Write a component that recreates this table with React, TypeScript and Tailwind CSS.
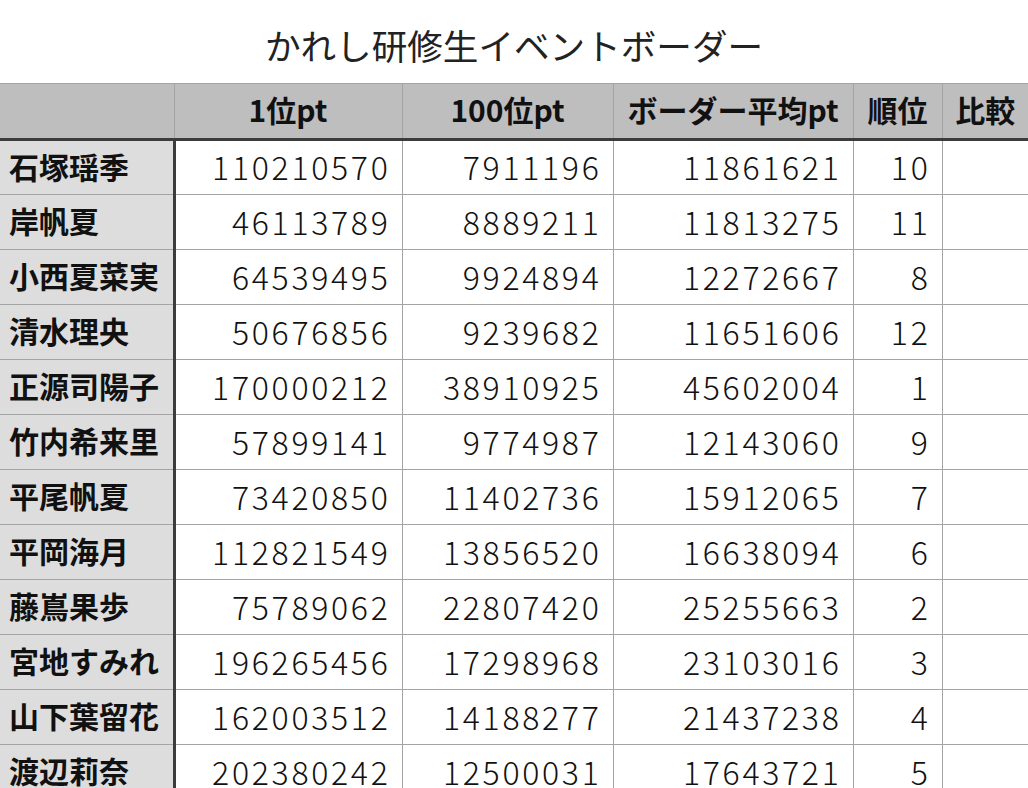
import React from "react";

const rows: [string, string, string, string, string][] = [
  ["石塚瑶季", "110210570", "7911196", "11861621", "10"],
  ["岸帆夏", "46113789", "8889211", "11813275", "11"],
  ["小西夏菜実", "64539495", "9924894", "12272667", "8"],
  ["清水理央", "50676856", "9239682", "11651606", "12"],
  ["正源司陽子", "170000212", "38910925", "45602004", "1"],
  ["竹内希来里", "57899141", "9774987", "12143060", "9"],
  ["平尾帆夏", "73420850", "11402736", "15912065", "7"],
  ["平岡海月", "112821549", "13856520", "16638094", "6"],
  ["藤嶌果歩", "75789062", "22807420", "25255663", "2"],
  ["宮地すみれ", "196265456", "17298968", "23103016", "3"],
  ["山下葉留花", "162003512", "14188277", "21437238", "4"],
  ["渡辺莉奈", "202380242", "12500031", "17643721", "5"],
];

export default function App() {
  return (
    <div className="w-[1028px] h-[788px] overflow-hidden bg-white text-[#111] [font-family:'Noto_Sans_CJK_JP','Noto_Sans',sans-serif]">
      <div className="h-[83px] flex items-center justify-center pt-[6px]">
        <h1 className="text-[35.6px] font-normal text-[#222]">かれし研修生イベントボーダー</h1>
      </div>
      <table className="border-collapse table-fixed w-[1028px]">
        <colgroup>
          <col className="w-[174px]" />
          <col className="w-[228px]" />
          <col className="w-[211px]" />
          <col className="w-[240px]" />
          <col className="w-[89px]" />
          <col className="w-[86px]" />
        </colgroup>
        <thead>
          <tr className="h-[56px] bg-[#bebebe] border-t border-[#a4a4a4] border-b-[3px] border-b-[#3c3c3c]">
            <th className="border-r border-[#a4a4a4]"></th>
            <th className="border-r border-[#a4a4a4] pb-[3px] text-[30px] font-bold text-center">1位pt</th>
            <th className="border-r border-[#a4a4a4] pb-[3px] text-[30px] font-bold text-center">100位pt</th>
            <th className="border-r border-[#a4a4a4] pb-[3px] text-[30px] font-bold text-center whitespace-nowrap">ボーダー平均pt</th>
            <th className="border-r border-[#a4a4a4] pb-[3px] text-[30px] font-bold text-center">順位</th>
            <th className="pb-[3px] text-[30px] font-bold text-center">比較</th>
          </tr>
        </thead>
        <tbody>
          {rows.map((r) => (
            <tr key={r[0]} className="h-[55px] border-b border-[#a4a4a4]">
              <td className="bg-[#dddddd] border-r-[3px] border-r-[#3c3c3c] pl-[9px] pb-[3px] text-[30px] font-bold whitespace-nowrap">{r[0]}</td>
              <td className="border-r border-[#a4a4a4] text-right pr-[11px] pb-[3px] text-[32px] font-light tracking-[2.7px]">{r[1]}</td>
              <td className="border-r border-[#a4a4a4] text-right pr-[11px] pb-[3px] text-[32px] font-light tracking-[2.7px]">{r[2]}</td>
              <td className="border-r border-[#a4a4a4] text-right pr-[11px] pb-[3px] text-[32px] font-light tracking-[2.7px]">{r[3]}</td>
              <td className="border-r border-[#a4a4a4] text-right pr-[11px] pb-[3px] text-[32px] font-light tracking-[2.7px]">{r[4]}</td>
              <td></td>
            </tr>
          ))}
        </tbody>
      </table>
    </div>
  );
}
